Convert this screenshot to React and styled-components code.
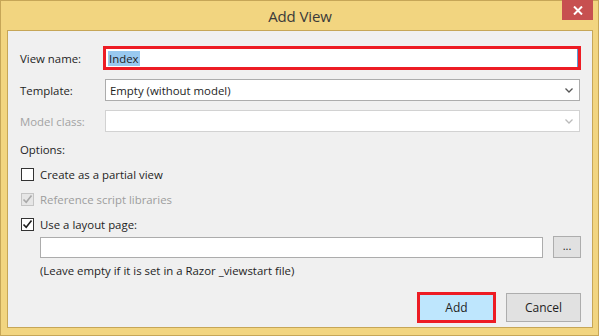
import React from "react";
import styled, { createGlobalStyle } from "styled-components";

const Global = createGlobalStyle`
  html, body { margin: 0; padding: 0; background: #f2d580; overflow: hidden; }
  * { box-sizing: border-box; }
`;

const Window = styled.div`
  width: 599px;
  height: 336px;
  border: 1px solid #c6a657;
  background: #f2d580;
  padding: 0 5px 7px 6px;
  display: flex;
  flex-direction: column;
  font-family: "Segoe UI", "Open Sans", "Noto Sans", sans-serif;
`;

const TitleBar = styled.div`
  flex: none;
  height: 29px;
  position: relative;
  display: flex;
  align-items: center;
  justify-content: center;
`;

const Title = styled.div`
  font-size: 15px;
  color: #3a3a3a;
  margin-top: 1px;
  letter-spacing: -0.1px;
`;

const CloseButton = styled.div`
  position: absolute;
  top: -1px;
  right: 0px;
  width: 31px;
  height: 20px;
  background: #c75050;
  display: flex;
  align-items: center;
  justify-content: center;
`;

const Client = styled.div`
  flex: 1;
  min-height: 0;
  overflow: hidden;
  border: 1px solid #c6a657;
  background: #f0f0f0;
  padding: 15px 11px 0 12px;
  display: flex;
  flex-direction: column;
  font-size: 11.4px;
  color: #1e1e1e;
`;

const FieldRow = styled.div`
  flex: none;
  display: flex;
  align-items: center;
  height: ${(p) => p.h}px;
  margin-top: ${(p) => p.mt || 0}px;
`;

const Label = styled.div`
  width: 85px;
  flex: none;
  color: ${(p) => (p.disabled ? "#a3a3a3" : "#1e1e1e")};
`;

const HighlightInput = styled.div`
  margin-left: -2px;
  width: 480px;
  height: 24px;
  border: 3px solid #ed1c24;
  background: #fff;
  box-shadow: inset -1px 0 0 #5b9bd5;
  display: flex;
  align-items: center;
  padding-left: 2px;
`;

const Selected = styled.span`
  background: #99c9ef;
  color: #1e1e1e;
  line-height: 15px;
  padding: 0 1px;
`;

const Select = styled.div`
  width: 475px;
  height: 22px;
  border: 1px solid ${(p) => (p.disabled ? "#d2d2d2" : "#acacac")};
  background: #fff;
  display: flex;
  align-items: center;
  justify-content: space-between;
  padding: 0 6px 0 4px;
  color: #1e1e1e;
`;

const SectionLabel = styled.div`
  flex: none;
  margin-top: 8px;
  height: 18px;
  display: flex;
  align-items: center;
`;

const CheckRow = styled.div`
  flex: none;
  display: flex;
  align-items: center;
  height: 16px;
  margin-top: ${(p) => p.mt}px;
  padding-left: 1px;
  color: ${(p) => (p.disabled ? "#9d9d9d" : "#1e1e1e")};
`;

const Box = styled.div`
  width: 13px;
  height: 13px;
  border: 1px solid ${(p) => (p.disabled ? "#c4c4c4" : "#333")};
  background: ${(p) => (p.disabled ? "#e6e6e6" : "#fff")};
  margin-right: 6px;
  display: flex;
  align-items: center;
  justify-content: center;
`;

const LayoutRow = styled.div`
  flex: none;
  display: flex;
  align-items: center;
  margin-top: 4px;
  padding-left: 20px;
  gap: 10px;
`;

const TextBox = styled.div`
  width: 503px;
  height: 21px;
  border: 1px solid #acacac;
  background: #fff;
`;

const SmallButton = styled.div`
  width: 28px;
  height: 22px;
  border: 1px solid #adadad;
  background: #e1e1e1;
  display: flex;
  align-items: center;
  justify-content: center;
  font-size: 11px;
  padding-bottom: 3px;
`;

const Hint = styled.div`
  flex: none;
  padding-left: 20px;
  margin-top: 3px;
  height: 18px;
  display: flex;
  align-items: center;
`;

const Footer = styled.div`
  flex: none;
  margin-top: 13px;
  display: flex;
  justify-content: flex-end;
  align-items: center;
  gap: 10px;
`;

const Button = styled.div`
  width: ${(p) => (p.primary ? 79 : 75)}px;
  height: ${(p) => (p.primary ? 31 : 29)}px;
  border: ${(p) => (p.primary ? "3px solid #ed1c24" : "1px solid #adadad")};
  background: ${(p) => (p.primary ? "#bee6fd" : "#e1e1e1")};
  display: flex;
  align-items: center;
  justify-content: center;
  color: #1e1e1e;
  font-size: 12px;
`;

const Chevron = ({ color }) => (
  <svg width="8" height="5" viewBox="0 0 8 5">
    <path d="M0.5 0.5 L4 4 L7.5 0.5" fill="none" stroke={color} strokeWidth="1.3" />
  </svg>
);

const Check = ({ color }) => (
  <svg width="11" height="11" viewBox="0 0 11 11">
    <path d="M1.5 5.5 L4.2 8.3 L9.5 1.5" fill="none" stroke={color} strokeWidth="1.6" />
  </svg>
);

export default function App() {
  return (
    <>
      <Global />
      <Window>
        <TitleBar>
          <Title>Add View</Title>
          <CloseButton>
            <svg width="10" height="9" viewBox="0 0 10 9">
              <path d="M1 0.5 L9 8.5 M9 0.5 L1 8.5" stroke="#fff" strokeWidth="2" />
            </svg>
          </CloseButton>
        </TitleBar>
        <Client>
          <FieldRow h={24}>
            <Label>View name:</Label>
            <HighlightInput>
              <Selected>Index</Selected>
            </HighlightInput>
          </FieldRow>
          <FieldRow h={22} mt={9}>
            <Label>Template:</Label>
            <Select>
              <span>Empty (without model)</span>
              <Chevron color="#555" />
            </Select>
          </FieldRow>
          <FieldRow h={22} mt={9}>
            <Label disabled>Model class:</Label>
            <Select disabled>
              <span />
              <Chevron color="#bbb" />
            </Select>
          </FieldRow>
          <SectionLabel>Options:</SectionLabel>
          <CheckRow mt={8}>
            <Box />
            Create as a partial view
          </CheckRow>
          <CheckRow mt={9} disabled>
            <Box disabled>
              <Check color="#a8a8a8" />
            </Box>
            Reference script libraries
          </CheckRow>
          <CheckRow mt={9}>
            <Box>
              <Check color="#1e1e1e" />
            </Box>
            Use a layout page:
          </CheckRow>
          <LayoutRow>
            <TextBox />
            <SmallButton>...</SmallButton>
          </LayoutRow>
          <Hint>(Leave empty if it is set in a Razor _viewstart file)</Hint>
          <Footer>
            <Button primary>Add</Button>
            <Button>Cancel</Button>
          </Footer>
        </Client>
      </Window>
    </>
  );
}
